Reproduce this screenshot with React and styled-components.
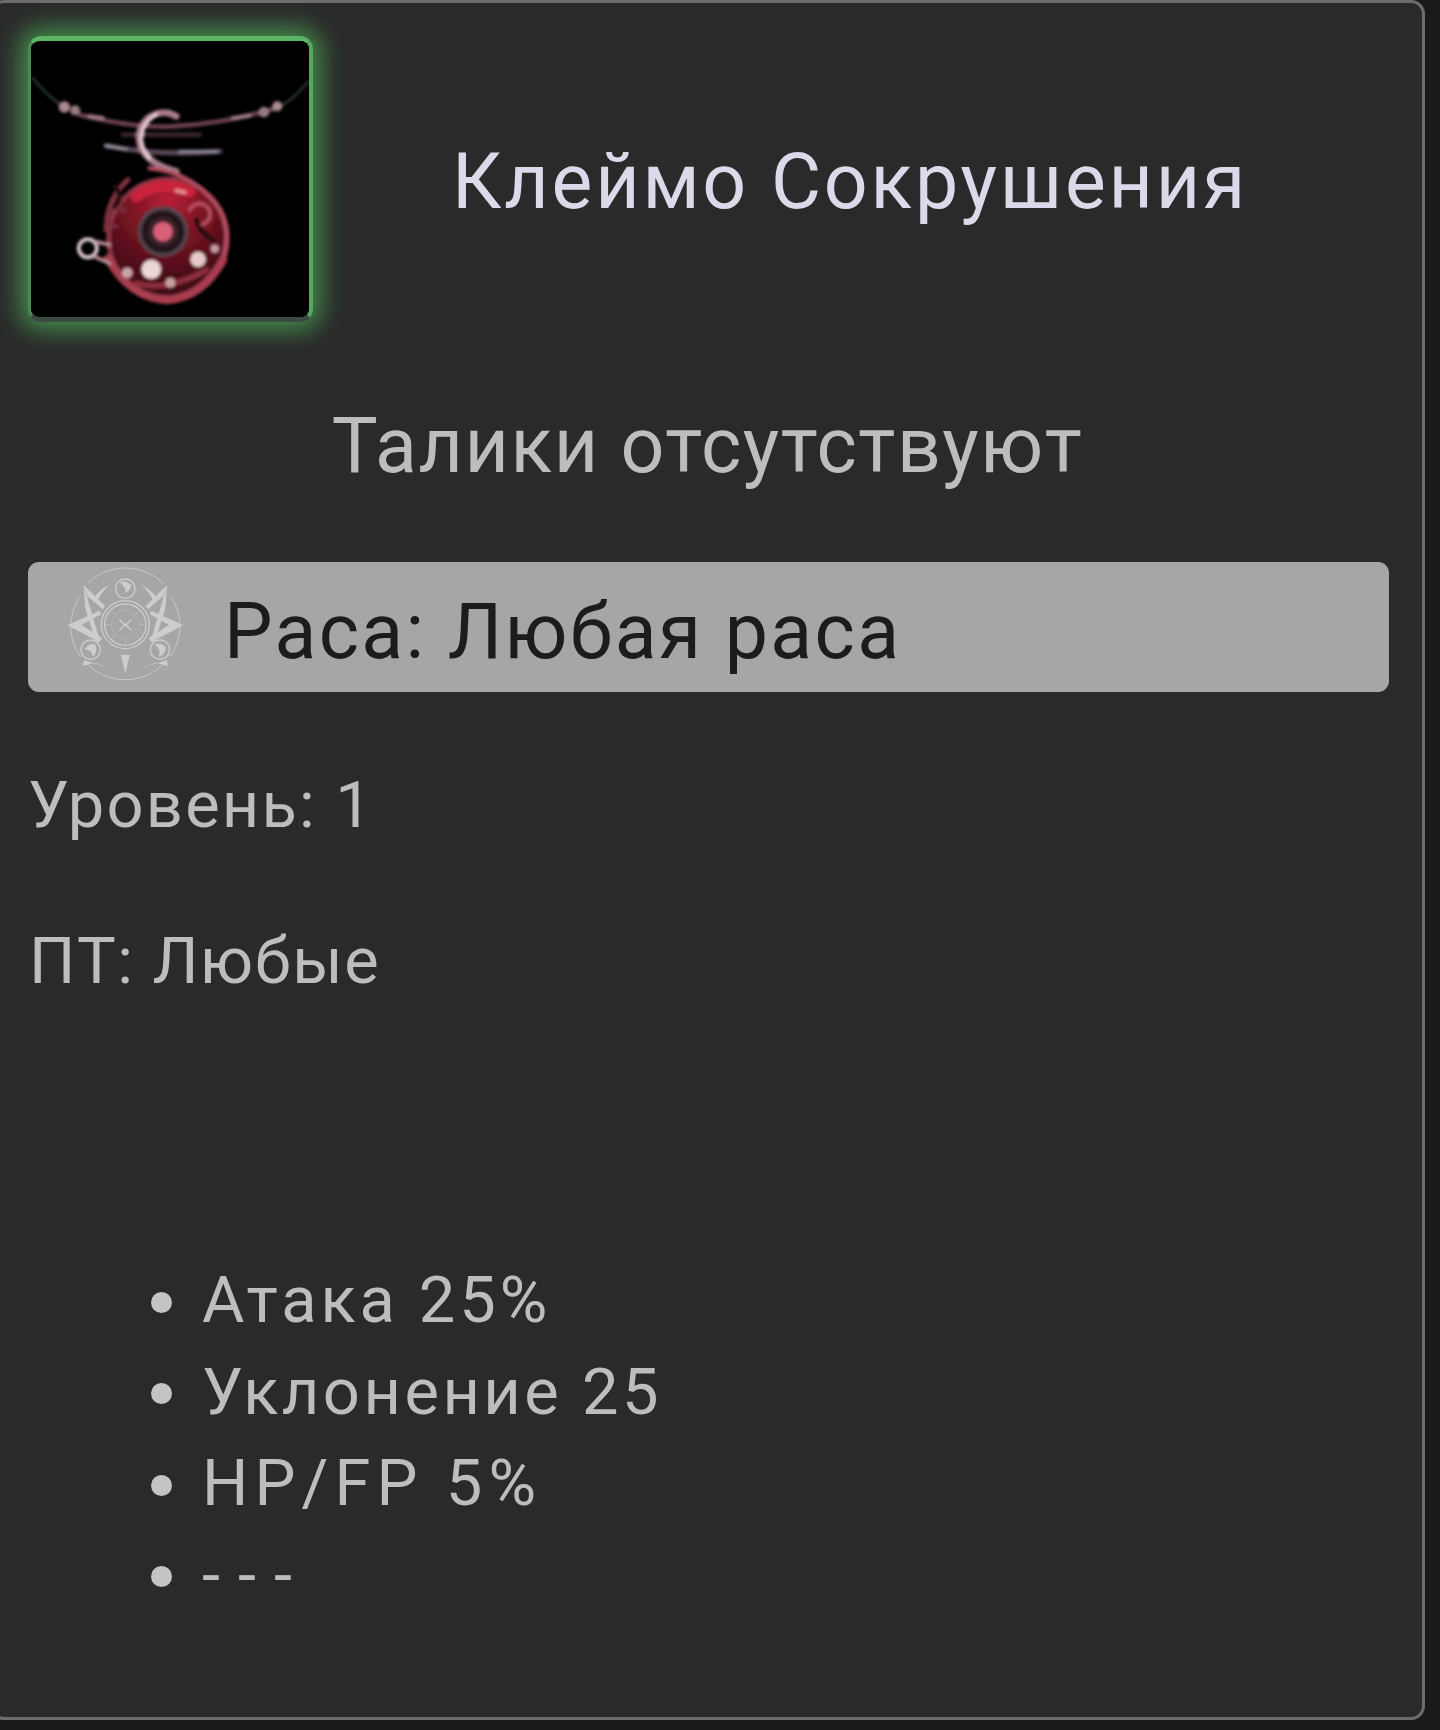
import React from 'react';
import styled, { createGlobalStyle } from 'styled-components';

const GlobalStyle = createGlobalStyle`
  html, body {
    margin: 0;
    padding: 0;
    background: #1a1a1a;
    overflow: hidden;
  }
  body {
    font-family: Roboto, "Noto Sans", sans-serif;
  }
`;

const Panel = styled.section`
  box-sizing: border-box;
  width: 1435px;
  height: 1720px;
  margin-left: -10px;
  padding: 33px 35px 0;
  background: #2a2a2a;
  border: 3px solid #6c6c6c;
  border-radius: 14px;
`;

const Header = styled.header`
  display: flex;
  align-items: center;
  height: 286px;
`;

const IconFrame = styled.div`
  flex: none;
  box-sizing: border-box;
  width: 285px;
  height: 286px;
  border-style: solid;
  border-width: 5px 4px 5px 3px;
  border-color: #5cb565 #55a85e #3b4a41 #4a8a54;
  border-radius: 13px;
  background: #000;
  box-shadow: 0 0 24px 8px rgba(80, 180, 90, 0.72);
  overflow: hidden;

  svg {
    display: block;
    width: 100%;
    height: 100%;
  }
`;

const Title = styled.h1`
  flex: 1;
  margin: 6px 0 0;
  text-align: center;
  font-size: 77px;
  font-weight: 400;
  line-height: 90px;
  letter-spacing: 2.8px;
  color: #dcdaea;
`;

const Sockets = styled.h2`
  margin: 79px 0 71px;
  text-align: center;
  font-size: 77px;
  font-weight: 400;
  line-height: 90px;
  letter-spacing: 1.6px;
  color: #bdbdbd;
`;

const RaceBar = styled.div`
  display: flex;
  align-items: center;
  gap: 24px;
  width: 1361px;
  height: 130px;
  padding-left: 40px;
  box-sizing: border-box;
  background: #a6a6a6;
  border-radius: 11px;

  svg {
    flex: none;
    width: 140px;
    height: 130px;
    margin-left: -8px;
  }
`;

const RaceText = styled.span`
  padding-top: 10px;
  font-size: 77px;
  line-height: 90px;
  letter-spacing: 2.3px;
  color: #1c1c1c;
`;

const Stat = styled.p`
  margin: ${(p) => p.$top}px 0 0;
  padding-left: ${(p) => p.$indent}px;
  font-size: 65px;
  line-height: 91px;
  letter-spacing: ${(p) => p.$spacing}px;
  color: #bdbdbd;
`;

const Bonuses = styled.ul`
  margin: 248px 0 0;
  padding: 0 0 0 123px;
  list-style: none;
  font-size: 65px;
  line-height: 91.5px;
  color: #bdbdbd;
`;

const Bonus = styled.li`
  display: flex;
  align-items: center;
  gap: 30px;
  letter-spacing: ${(p) => p.$spacing}px;

  &::before {
    content: '';
    flex: none;
    width: 21px;
    height: 21px;
    margin-top: 3px;
    border-radius: 50%;
    background: #c4c4c4;
  }
`;

const Pendant = () => (
  <svg viewBox="95 125 832 825" aria-hidden="true">
    <defs>
      <filter id="soft" x="-10%" y="-10%" width="120%" height="120%">
        <feGaussianBlur stdDeviation="5" />
      </filter>
      <radialGradient id="disc" cx="50%" cy="18%" r="85%">
        <stop offset="0%" stopColor="#b81f36" />
        <stop offset="38%" stopColor="#7a1423" />
        <stop offset="75%" stopColor="#4c0d18" />
        <stop offset="100%" stopColor="#3a0a12" />
      </radialGradient>
    </defs>
    <rect x="95" y="125" width="832" height="825" fill="#000" />
    <g filter="url(#soft)" fill="none" strokeLinecap="round">
      <path d="M100 235 Q140 285 190 320" stroke="#2b3a38" strokeWidth="7" />
      <path d="M925 245 Q890 290 850 315" stroke="#2b3a38" strokeWidth="7" />
      <path d="M240 345 Q400 385 520 380 Q680 372 840 322" stroke="#6a3f50" strokeWidth="14" />
      <path d="M270 350 L310 355 M700 355 L750 348" stroke="#a07a86" strokeWidth="12" />
      <path d="M320 438 Q480 470 660 455" stroke="#584a58" strokeWidth="16" />
      <path d="M320 438 L380 448 M540 455 L650 455" stroke="#8f8694" strokeWidth="10" />
      <path d="M370 405 L600 405" stroke="#3a2830" strokeWidth="14" />
      <circle cx="195" cy="322" r="17" fill="#a98a90" />
      <circle cx="227" cy="332" r="15" fill="#9a7a82" />
      <circle cx="792" cy="337" r="16" fill="#9a7a82" />
      <circle cx="832" cy="320" r="15" fill="#a98a90" />
      <path d="M530 350 Q490 325 445 355 Q405 395 425 445 Q450 495 530 515" stroke="#a87c8a" strokeWidth="20" />
      <path d="M470 345 Q425 370 425 420 Q430 455 450 475" stroke="#e6ccd4" strokeWidth="11" />
      <circle cx="505" cy="715" r="178" fill="url(#disc)" stroke="#8f3444" strokeWidth="14" />
      <path d="M410 590 Q480 535 570 575" stroke="#c9233a" strokeWidth="34" />
      <path d="M530 572 L555 578" stroke="#e88892" strokeWidth="12" />
      <path d="M450 505 Q590 520 660 630 Q705 720 650 810" stroke="#b04e5e" strokeWidth="13" />
      <path d="M385 540 Q320 600 320 690" stroke="#7e303e" strokeWidth="16" />
      <path d="M600 675 A32 32 0 1 0 570 630" stroke="#b84e60" strokeWidth="11" />
      <path d="M350 680 A28 28 0 1 1 375 635" stroke="#7e2e3c" strokeWidth="11" />
      <path d="M345 560 Q375 590 345 620 M640 720 Q600 700 590 660" stroke="#1c070c" strokeWidth="14" />
      <circle cx="490" cy="695" r="70" fill="#23151b" stroke="#54424c" strokeWidth="12" strokeDasharray="12 8" />
      <circle cx="490" cy="695" r="44" fill="#3a2029" />
      <circle cx="490" cy="695" r="29" fill="#d9607a" />
      <path d="M325 775 Q390 895 505 900 Q610 890 670 780" stroke="#a83e50" strokeWidth="24" />
      <path d="M410 850 Q500 875 620 810" stroke="#8e2e3e" strokeWidth="16" />
      <circle cx="265" cy="745" r="27" stroke="#d6c6ca" strokeWidth="12" />
      <path d="M290 725 L330 735 M285 770 Q310 780 330 790" stroke="#b88a94" strokeWidth="11" />
      <circle cx="455" cy="808" r="29" fill="#ecd6d6" />
      <circle cx="595" cy="778" r="23" fill="#e6caca" />
      <circle cx="383" cy="818" r="16" fill="#caa4a8" />
      <circle cx="645" cy="746" r="12" fill="#c89ca2" />
      <circle cx="512" cy="848" r="15" fill="#c8a0a4" />
    </g>
  </svg>
);

const bladesLeft = (
  <>
    <polygon points="70,68 120,236 108,241 76,140" />
    <polygon points="70,68 135,132 128,142 82,102" />
    <polygon points="22,190 118,146 124,156 52,196" />
    <polygon points="22,190 60,186 126,228 118,240" />
    <path d="M102 108 Q118 82 148 68 Q128 86 110 118 Z" />
    <polygon points="68,312 72,295 150,318 105,302" />
  </>
);

const Emblem = () => (
  <svg viewBox="0 0 420 390" aria-hidden="true">
    <g fill="#cdcdcd" stroke="none">
      {bladesLeft}
      <g transform="translate(392 0) scale(-1 1)">{bladesLeft}</g>
      <polygon points="183,278 209,278 196,336" />
    </g>
    <g fill="none" stroke="#cdcdcd">
      <path d="M80 66 A163 163 0 0 1 312 66" strokeWidth="2.5" />
      <path d="M72 296 A163 163 0 0 0 320 296" strokeWidth="2.5" />
      <path d="M33 175 A163 163 0 0 0 62 285" strokeWidth="2.5" />
      <path d="M359 175 A163 163 0 0 1 330 285" strokeWidth="2.5" />
      <path d="M33 175 A163 163 0 0 1 56 108" strokeWidth="2.5" />
      <path d="M359 175 A163 163 0 0 0 336 108" strokeWidth="2.5" />
      <circle cx="196" cy="188" r="72" strokeWidth="4" />
      <circle cx="196" cy="188" r="62" strokeWidth="4" />
      <circle cx="196" cy="188" r="42" strokeWidth="1.5" strokeDasharray="5 6" />
      <path d="M196 130 V148 M238 146 L224 160 M254 188 H236 M238 230 L224 216 M196 246 V228 M154 230 L168 216 M138 188 H156 M154 146 L168 160" strokeWidth="1.5" />
      <path d="M178 172 L196 192 L214 172 M178 206 L196 186 L214 206" strokeWidth="4" />
      <circle cx="196" cy="80" r="29" strokeWidth="4" />
      <circle cx="92" cy="263" r="29" strokeWidth="4" />
      <circle cx="300" cy="263" r="29" strokeWidth="4" />
    </g>
    <g fill="#cdcdcd">
      <path d="M180 62 Q196 52 214 70 Q210 88 196 92 Q200 76 180 62 Z" />
      <path d="M74 262 Q88 240 106 248 Q114 268 100 284 Q92 262 74 262 Z" />
      <path d="M284 248 Q304 240 318 258 Q312 282 296 284 Q306 262 284 248 Z" />
    </g>
  </svg>
);

export default function App() {
  return (
    <>
      <GlobalStyle />
      <Panel>
        <Header>
          <IconFrame>
            <Pendant />
          </IconFrame>
          <Title>Клеймо Сокрушения</Title>
        </Header>
        <Sockets>Талики отсутствуют</Sockets>
        <RaceBar>
          <Emblem />
          <RaceText>Раса: Любая раса</RaceText>
        </RaceBar>
        <Stat $top={68} $indent={-3} $spacing={2.2}>Уровень: 1</Stat>
        <Stat $top={65} $indent={1} $spacing={1.6}>ПТ: Любые</Stat>
        <Bonuses>
          <Bonus $spacing={3.9}>Атака 25%</Bonus>
          <Bonus $spacing={3.5}>Уклонение 25</Bonus>
          <Bonus $spacing={6.1}>HP/FP 5%</Bonus>
          <Bonus $spacing={18}>---</Bonus>
        </Bonuses>
      </Panel>
    </>
  );
}
